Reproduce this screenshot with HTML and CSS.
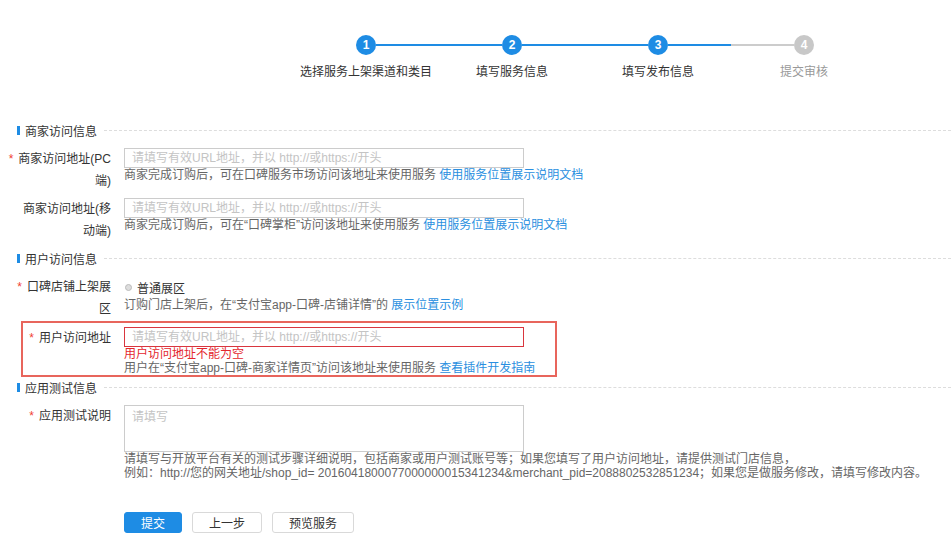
FILE: index.html
```html
<!DOCTYPE html>
<html lang="zh-CN">
<head>
  <meta charset="UTF-8">
  <title>填写发布信息</title>
  <link rel="stylesheet" href="styles.css">
</head>
<body>
  <div class="steps">
    <div class="step done">
      <div class="step-head"><span class="bar blank"></span><span class="num">1</span><span class="bar on"></span></div>
      <div class="step-title">选择服务上架渠道和类目</div>
    </div>
    <div class="step done">
      <div class="step-head"><span class="bar on"></span><span class="num">2</span><span class="bar on"></span></div>
      <div class="step-title">填写服务信息</div>
    </div>
    <div class="step done">
      <div class="step-head"><span class="bar on"></span><span class="num">3</span><span class="bar on"></span></div>
      <div class="step-title">填写发布信息</div>
    </div>
    <div class="step">
      <div class="step-head"><span class="bar"></span><span class="num">4</span><span class="bar blank"></span></div>
      <div class="step-title">提交审核</div>
    </div>
  </div>

  <form class="form">
    <div class="section-title"><i></i><span>商家访问信息</span></div>

    <div class="form-row">
      <label class="form-label"><em>*</em>商家访问地址(PC<br>端)</label>
      <div class="form-control">
        <input class="text-input" type="text" placeholder="请填写有效URL地址，并以 http://或https://开头">
        <div class="help">商家完成订购后，可在口碑服务市场访问该地址来使用服务 <a href="#">使用服务位置展示说明文档</a></div>
      </div>
    </div>

    <div class="form-row">
      <label class="form-label">商家访问地址(移<br>动端)</label>
      <div class="form-control">
        <input class="text-input" type="text" placeholder="请填写有效URL地址，并以 http://或https://开头">
        <div class="help">商家完成订购后，可在“口碑掌柜”访问该地址来使用服务 <a href="#">使用服务位置展示说明文档</a></div>
      </div>
    </div>

    <div class="section-title"><i></i><span>用户访问信息</span></div>

    <div class="form-row">
      <label class="form-label"><em>*</em>口碑店铺上架展<br>区</label>
      <div class="form-control">
        <div class="radio-line"><span class="radio"></span>普通展区</div>
        <div class="help">订购门店上架后，在“支付宝app-口碑-店铺详情”的 <a href="#">展示位置示例</a></div>
      </div>
    </div>

    <div class="form-row has-error">
      <label class="form-label"><em>*</em>用户访问地址</label>
      <div class="form-control">
        <input class="text-input" type="text" placeholder="请填写有效URL地址，并以 http://或https://开头">
        <div class="help error-text">用户访问地址不能为空</div>
        <div class="help">用户在“支付宝app-口碑-商家详情页”访问该地址来使用服务 <a href="#">查看插件开发指南</a></div>
      </div>
    </div>

    <div class="section-title"><i></i><span>应用测试信息</span></div>

    <div class="form-row">
      <label class="form-label"><em>*</em>应用测试说明</label>
      <div class="form-control">
        <textarea class="text-area" placeholder="请填写"></textarea>
        <div class="help">请填写与开放平台有关的测试步骤详细说明，包括商家或用户测试账号等；如果您填写了用户访问地址，请提供测试门店信息，</div>
        <div class="help">例如：http://您的网关地址/shop_id= 2016041800077000000015341234&amp;merchant_pid=2088802532851234；如果您是做服务修改，请填写修改内容。</div>
      </div>
    </div>

    <div class="actions">
      <button type="submit" class="btn btn-primary">提交</button>
      <button type="button" class="btn">上一步</button>
      <button type="button" class="btn">预览服务</button>
    </div>
  </form>
</body>
</html>
```

FILE: styles.css
```css
body {
  margin: 0;
  font-family: "Liberation Sans", "Noto Sans CJK SC", sans-serif;
  font-size: 12px;
  color: #333;
  background-color: #fff;
}
a {
  color: #2a8fe0;
  text-decoration: none;
}

/* steps */
.steps {
  display: flex;
  padding: 35px 0 0 293px;
}
.step {
  width: 146px;
}
.step-head {
  display: flex;
  align-items: center;
  height: 20px;
}
.step-head .bar {
  flex: 1;
  height: 2px;
  background-color: #ccc;
}
.step-head .bar.on {
  background-color: #1e8ce4;
}
.step-head .bar.blank {
  background-color: transparent;
}
.step-head .num {
  width: 20px;
  height: 20px;
  border-radius: 50%;
  background-color: #c8c8c8;
  color: #fff;
  font-weight: bold;
  font-size: 12px;
  line-height: 20px;
  text-align: center;
}
.step.done .num {
  background-color: #1e8ce4;
}
.step-title {
  margin-top: 9px;
  line-height: 16px;
  text-align: center;
  color: #999;
}
.step.done .step-title {
  color: #333;
}

/* form */
.form {
  margin-top: 40px;
}
.section-title {
  display: flex;
  align-items: center;
  height: 20px;
  padding-left: 17px;
  margin-bottom: 8px;
}
.section-title i {
  width: 3px;
  height: 9px;
  margin-right: 5px;
  background-color: #1e8ce4;
}
.section-title::after {
  content: "";
  flex: 1;
  margin-left: 7px;
  border-top: 1px dashed #ddd;
}
.form-row {
  display: flex;
  padding-left: 5px;
  margin-bottom: 6px;
}
.form-label {
  flex: 0 0 106px;
  width: 106px;
  line-height: 22px;
  text-align: right;
  white-space: nowrap;
  color: #333;
}
.form-label em {
  font-style: normal;
  color: #f04134;
  margin-right: 5px;
}
.form-control {
  flex: 1;
  padding-left: 13px;
}
.text-input {
  display: block;
  width: 400px;
  height: 20px;
  margin: 0;
  padding: 0 7px;
  border: 1px solid #ccc;
  box-sizing: border-box;
  font-family: inherit;
  font-size: 12px;
  color: #333;
  outline: none;
}
.text-area {
  display: block;
  width: 400px;
  height: 47px;
  margin: 0;
  padding: 4px 7px;
  border: 1px solid #ccc;
  box-sizing: border-box;
  font-family: inherit;
  font-size: 12px;
  line-height: 14px;
  resize: none;
  outline: none;
}
.text-input::placeholder,
.text-area::placeholder {
  color: #c4c4c4;
}
.help {
  line-height: 14px;
  color: #666;
  white-space: nowrap;
}
.radio-line {
  display: flex;
  align-items: center;
  height: 22px;
  color: #333;
}
.radio {
  width: 5px;
  height: 5px;
  margin: 0 5px 0 1px;
  border: 1px solid #bbb;
  border-radius: 50%;
  background-color: #ddd;
}

/* error state */
.form-row.has-error {
  width: 536px;
  margin: -5px 0 0 21px;
  padding: 4px 0 0;
  border: 2px solid #e8655c;
  box-sizing: border-box;
}
.has-error .form-label {
  flex-basis: 88px;
  width: 88px;
}
.has-error .text-input {
  border-color: #d9363e;
}
.error-text {
  color: #e4262d;
}

/* buttons */
.actions {
  display: flex;
  gap: 10px;
  margin-top: 32px;
  padding-left: 124px;
}
.btn {
  height: 21px;
  padding: 0 16px;
  border: 1px solid #d9d9d9;
  border-radius: 3px;
  background-color: #fff;
  color: #333;
  font-family: inherit;
  font-size: 12px;
  cursor: pointer;
}
.btn-primary {
  background-color: #1e8ce4;
  border-color: #1e8ce4;
  color: #fff;
}
```
